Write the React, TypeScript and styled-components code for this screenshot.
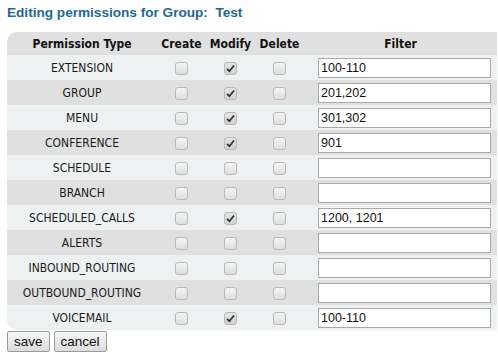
import type { FC } from 'react';
import styled, { createGlobalStyle } from 'styled-components';

const GlobalStyle = createGlobalStyle`
  * {
    box-sizing: border-box;
  }

  body {
    margin: 0;
    background: #ffffff;
    font-family: 'DejaVu Sans Condensed', 'DejaVu Sans', Tahoma, sans-serif;
    color: #1a1a1a;
  }
`;

const Page = styled.div`
  padding: 4px 0 0 7px;
`;

const Title = styled.h2`
  margin: 0 0 10px;
  font-family: 'Liberation Sans', Arial, sans-serif;
  font-size: 13.6px;
  line-height: 18px;
  font-weight: bold;
  color: #1d6896;
  white-space: pre;
`;

const Table = styled.table`
  width: 490px;
  border-collapse: separate;
  border-spacing: 0;
  table-layout: fixed;
  font-size: 12px;
`;

const HeadCell = styled.th`
  height: 23px;
  padding: 0;
  background: #e0e0e0;
  font-weight: bold;
  text-align: center;
  color: #111;

  &:first-child {
    border-top-left-radius: 10px;
  }
`;

const Row = styled.tr<{ $alt: boolean }>`
  background: ${(p) => (p.$alt ? '#e0e0e0' : '#eef1f2')};

  &:last-child td:first-child {
    border-bottom-left-radius: 10px;
  }
`;

const Cell = styled.td`
  height: 25px;
  padding: 0;
  text-align: center;
  vertical-align: middle;
`;

const FilterCell = styled.td`
  height: 25px;
  padding: 0 0 0 14px;
  vertical-align: middle;
`;

const Box = styled.span<{ $checked: boolean }>`
  display: inline-flex;
  align-items: center;
  justify-content: center;
  width: 13px;
  height: 13px;
  margin-top: 2px;
  border: 1px solid #b8b8b8;
  border-radius: 3px;
  background: ${(p) =>
    p.$checked
      ? 'linear-gradient(#e4e4e4, #d2d2d2)'
      : 'linear-gradient(#f5f5f5, #dedede)'};
  vertical-align: middle;
`;

const FilterInput = styled.input`
  display: block;
  width: 173px;
  height: 20px;
  margin: 0;
  padding: 0 2px;
  border: 1px solid #a9a9a9;
  background: #ffffff;
  font-family: 'Liberation Sans', Arial, sans-serif;
  font-size: 12.5px;
  color: #111;
  outline: none;
`;

const Actions = styled.div`
  display: flex;
  gap: 4px;
  margin-top: 1px;
`;

const Button = styled.button`
  height: 21px;
  padding: 0 6px;
  border: 1px solid #9a9a9a;
  border-radius: 2px;
  background: linear-gradient(#f7f7f7, #dcdcdc);
  font-family: 'Liberation Sans', Arial, sans-serif;
  font-size: 13.5px;
  color: #111;
`;

type Perm = { name: string; create: boolean; modify: boolean; del: boolean; filter: string };

const perms: Perm[] = [
  { name: 'EXTENSION', create: false, modify: true, del: false, filter: '100-110' },
  { name: 'GROUP', create: false, modify: true, del: false, filter: '201,202' },
  { name: 'MENU', create: false, modify: true, del: false, filter: '301,302' },
  { name: 'CONFERENCE', create: false, modify: true, del: false, filter: '901' },
  { name: 'SCHEDULE', create: false, modify: false, del: false, filter: '' },
  { name: 'BRANCH', create: false, modify: false, del: false, filter: '' },
  { name: 'SCHEDULED_CALLS', create: false, modify: true, del: false, filter: '1200, 1201' },
  { name: 'ALERTS', create: false, modify: false, del: false, filter: '' },
  { name: 'INBOUND_ROUTING', create: false, modify: false, del: false, filter: '' },
  { name: 'OUTBOUND_ROUTING', create: false, modify: false, del: false, filter: '' },
  { name: 'VOICEMAIL', create: false, modify: true, del: false, filter: '100-110' },
];

const Check: FC<{ checked: boolean }> = ({ checked }) => (
  <Box $checked={checked}>
    {checked && (
      <svg width="9" height="9" viewBox="0 0 9 9">
        <path d="M1 4.8 L3.4 7.2 L8 1.5" fill="none" stroke="#333" strokeWidth="1.8" />
      </svg>
    )}
  </Box>
);

const App: FC = () => {
  return (
    <>
      <GlobalStyle />
      <Page>
        <Title>{'Editing permissions for Group:  Test'}</Title>
        <Table>
          <colgroup>
            <col style={{ width: 150 }} />
            <col style={{ width: 49 }} />
            <col style={{ width: 49 }} />
            <col style={{ width: 49 }} />
            <col />
          </colgroup>
          <thead>
            <tr>
              <HeadCell>Permission Type</HeadCell>
              <HeadCell>Create</HeadCell>
              <HeadCell>Modify</HeadCell>
              <HeadCell>Delete</HeadCell>
              <HeadCell>Filter</HeadCell>
            </tr>
          </thead>
          <tbody>
            {perms.map((p, i) => (
              <Row key={p.name} $alt={i % 2 === 1}>
                <Cell>{p.name}</Cell>
                <Cell>
                  <Check checked={p.create} />
                </Cell>
                <Cell>
                  <Check checked={p.modify} />
                </Cell>
                <Cell>
                  <Check checked={p.del} />
                </Cell>
                <FilterCell>
                  <FilterInput defaultValue={p.filter} />
                </FilterCell>
              </Row>
            ))}
          </tbody>
        </Table>
        <Actions>
          <Button>save</Button>
          <Button>cancel</Button>
        </Actions>
      </Page>
    </>
  );
};

export default App;
